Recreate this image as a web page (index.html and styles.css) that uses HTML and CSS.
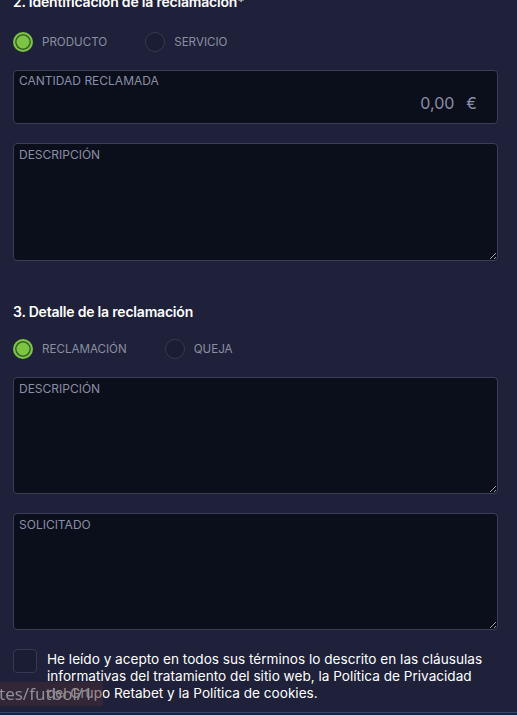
FILE: index.html
```html
<!DOCTYPE html>
<html lang="es">
<head>
    <meta charset="UTF-8">
    <meta name="viewport" content="width=device-width, initial-scale=1.0">
    <title>Hoja de reclamación</title>
    <link rel="stylesheet" href="styles.css">
</head>
<body>
    <form class="claim-form">
        <section class="block">
            <h2>2. Identificación de la reclamación*</h2>
            <div class="radio-row">
                <label class="radio">
                    <span class="dot checked"></span>
                    <span class="radio-text">PRODUCTO</span>
                </label>
                <label class="radio">
                    <span class="dot"></span>
                    <span class="radio-text">SERVICIO</span>
                </label>
            </div>
            <div class="field amount">
                <label for="amount">CANTIDAD RECLAMADA</label>
                <div class="amount-value">
                    <input type="text" id="amount" value="0,00">
                    <span class="currency">€</span>
                </div>
            </div>
            <textarea class="area" placeholder="DESCRIPCIÓN"></textarea>
        </section>

        <section class="block second">
            <h2>3. Detalle de la reclamación</h2>
            <div class="radio-row">
                <label class="radio">
                    <span class="dot checked"></span>
                    <span class="radio-text">RECLAMACIÓN</span>
                </label>
                <label class="radio">
                    <span class="dot"></span>
                    <span class="radio-text">QUEJA</span>
                </label>
            </div>
            <textarea class="area" placeholder="DESCRIPCIÓN"></textarea>
            <textarea class="area" placeholder="SOLICITADO"></textarea>
        </section>

        <label class="accept">
            <span class="box"></span>
            <span class="accept-text">He leído y acepto en todos sus términos lo descrito en las cláusulas informativas del tratamiento del sitio web, la Política de Privacidad del Grupo Retabet y la Política de cookies.</span>
        </label>
    </form>
    <div class="footer-line"></div>

    <div class="status-bubble">tes/futbol/1</div>
</body>
</html>
```

FILE: styles.css
```css
:root {
    --bg: #1e2139;
    --field-bg: #0b0f1c;
    --field-border: #3a3f57;
    --muted: #8a8ea4;
    --green: #7cc444;
}
html {
    color-scheme: dark;
}
body {
    margin: 0;
    background-color: var(--bg);
    font-family: 'Inter', 'Noto Sans', sans-serif;
    color: #fff;
    overflow: hidden;
    height: 715px;
}
.claim-form {
    margin-top: -8px;
    padding: 0 19px 0 13px;
}
h2 {
    margin: 0;
    font-size: 14px;
    line-height: 20px;
    font-weight: 600;
    letter-spacing: -0.2px;
    color: #fff;
}
.block {
    display: flex;
    flex-direction: column;
}
.second {
    margin-top: 41px;
}
.radio-row {
    display: flex;
    gap: 38px;
    margin: 20px 0 18px;
    height: 20px;
    align-items: center;
}
.second .radio-row {
    margin: 17px 0 18px;
}
.radio {
    display: flex;
    align-items: center;
    gap: 9px;
    cursor: pointer;
}
.dot {
    width: 20px;
    height: 20px;
    box-sizing: border-box;
    border-radius: 50%;
    border: 1px solid #353a54;
    background: #1a1d33;
}
.dot.checked {
    border: 2px solid var(--green);
    background: var(--green);
    box-shadow: inset 0 0 0 1.5px #3b5a2a;
}
.radio-text {
    font-size: 11.6px;
    color: var(--muted);
}
.field {
    background: var(--field-bg);
    border: 1px solid var(--field-border);
    border-radius: 4px;
    height: 54px;
    box-sizing: border-box;
    padding: 3px 5px 0;
    margin-bottom: 19px;
}
.field label {
    display: block;
    font-size: 12px;
    line-height: 14px;
    color: var(--muted);
}
.amount-value {
    display: flex;
    justify-content: flex-end;
    align-items: center;
    gap: 12px;
    padding-right: 15px;
    margin-top: 5px;
}
.amount-value input {
    background: transparent;
    border: none;
    outline: none;
    text-align: right;
    width: 80px;
    padding: 0;
    font-family: inherit;
    font-size: 16px;
    color: var(--muted);
}
.currency {
    font-size: 16px;
    color: var(--muted);
}
.area {
    display: block;
    width: 100%;
    height: 118px;
    box-sizing: border-box;
    background: var(--field-bg);
    border: 1px solid var(--field-border);
    border-radius: 4px;
    padding: 4px 5px;
    font-family: inherit;
    font-size: 12px;
    line-height: 14px;
    color: #fff;
    resize: vertical;
    margin: 0;
}
.second .area {
    height: 117px;
}
.area + .area {
    margin-top: 19px;
}
.area::placeholder {
    color: var(--muted);
}
.accept {
    display: flex;
    gap: 10px;
    margin-top: 19px;
    cursor: pointer;
}
.box {
    flex: none;
    width: 24px;
    height: 24px;
    box-sizing: border-box;
    border: 1px solid #353a54;
    border-radius: 4px;
    background: #1a1d33;
}
.accept-text {
    font-size: 13.6px;
    line-height: 17px;
    color: #fff;
    margin-top: 2px;
    padding-right: 12px;
}
.footer-line {
    margin-top: 10px;
    border-top: 1px solid #34456a;
    height: 10px;
    background: #19223f;
}
.status-bubble {
    position: fixed;
    left: 0;
    bottom: 9px;
    width: 103px;
    height: 24px;
    line-height: 24px;
    box-sizing: border-box;
    white-space: nowrap;
    overflow: hidden;
    background: rgba(70, 45, 55, 0.55);
    color: #8f8f96;
    font-family: 'Noto Sans', sans-serif;
    font-size: 17px;
    text-indent: -1px;
    border-top-right-radius: 2px;
}
```
